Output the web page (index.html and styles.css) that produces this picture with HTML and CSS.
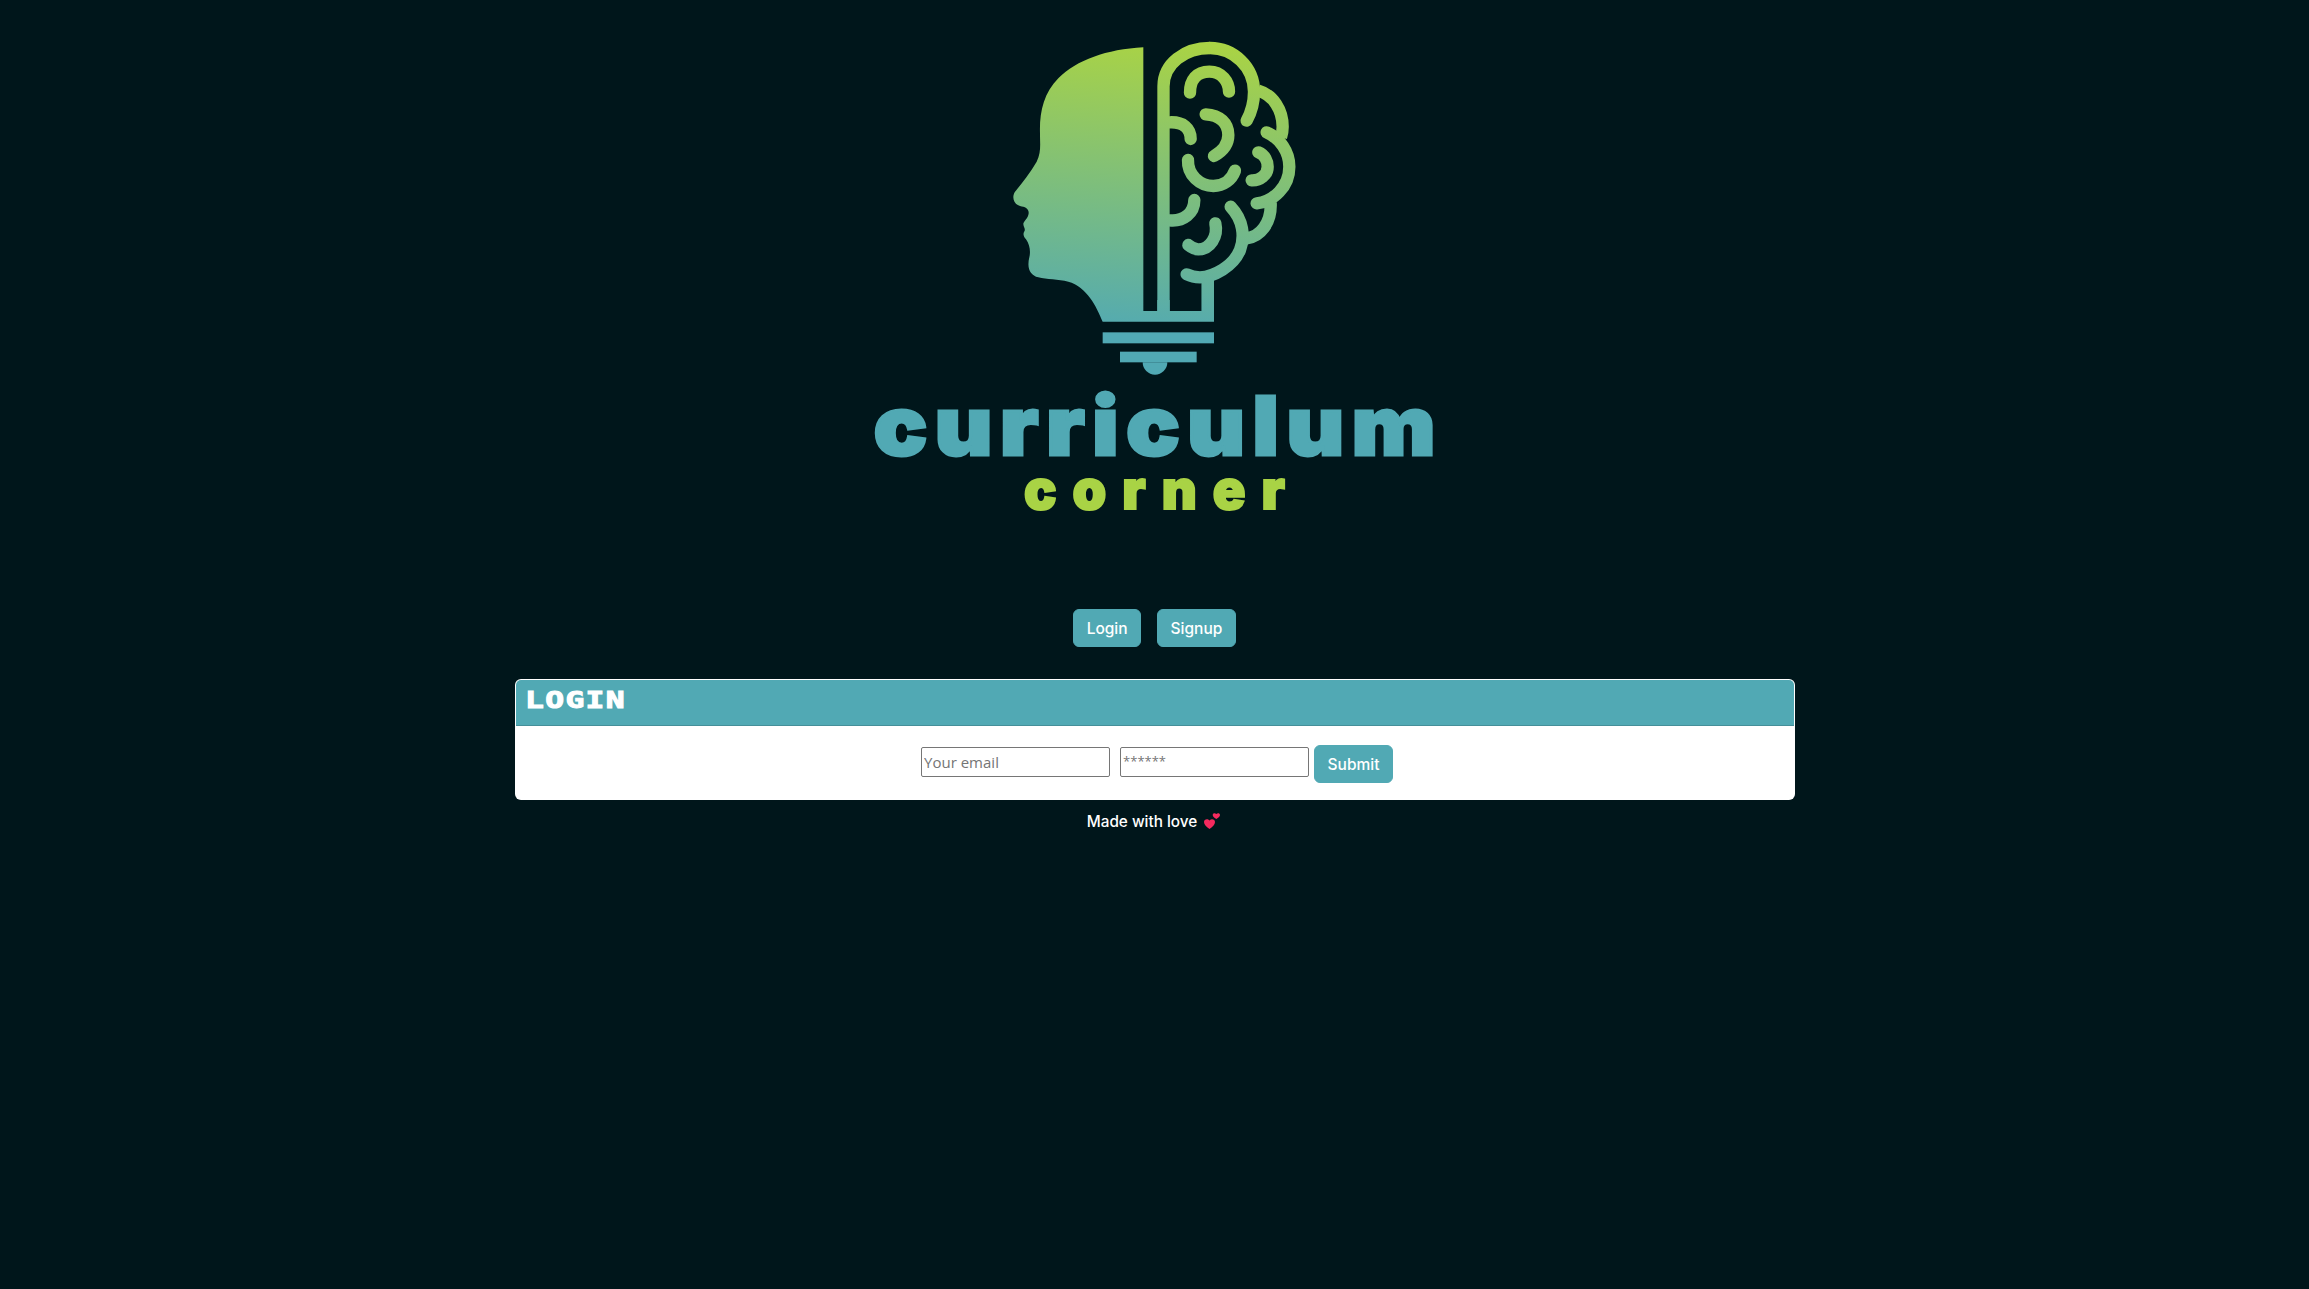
FILE: index.html
```html
<!DOCTYPE html>
<html lang="en">
<head>
<meta charset="utf-8">
<title>Curriculum Corner</title>
<link rel="stylesheet" href="styles.css">
</head>
<body>
<header class="brand">
  <svg class="logo-mark" viewBox="0 0 1050 1080" width="350" height="360" aria-hidden="true">
    <defs>
      <linearGradient id="g" gradientUnits="userSpaceOnUse" x1="570" y1="70" x2="500" y2="960">
        <stop offset="0" stop-color="#a9d345"/>
        <stop offset="1" stop-color="#51a9b4"/>
      </linearGradient>
    </defs>
    <path fill="url(#g)" d="M490 82C380 88 290 120 235 175C190 220 178 280 180 340C180 375 184 395 170 425C150 460 125 490 105 515C95 530 100 552 120 558C135 561 147 565 146 580C145 595 130 605 130 612C130 620 136 625 134 632C128 640 130 650 138 658C150 675 152 695 148 712C140 745 150 765 175 772C200 778 235 778 265 785C320 800 350 860 368 905H702V785H665V873H569V840H532V873H490Z"/>
    <g fill="none" stroke="url(#g)" stroke-width="37" stroke-linecap="round">
      <path stroke-linecap="butt" d="M550.500 880V200C550 130 615 84 690 84"/>
      <path d="M690 84C760 84 822 140 822 215C822 250 812 280 800 302"/>
      <path stroke-linecap="butt" d="M835 212C880 225 908 270 908 320C908 335 905 345 903 352"/>
      <path d="M860 337C900 355 928 395 928 440C928 500 880 545 830 550"/>
      <path stroke-linecap="butt" d="M872 548C875 610 840 650 800 655"/>
      <path d="M752 560C790 600 795 650 780 690C760 740 700 770 660 772C645 772 630 768 620 763"/>
      <path stroke-linecap="butt" d="M683.500 770V880"/>
      <path d="M630 218C630 180 650 155 688 155C725 155 747 185 747 215"/>
      <path d="M677 283C720 285 745 310 745 345C745 375 725 395 702 408"/>
      <path d="M569 307C610 305 632 325 632 357"/>
      <path d="M624 420C622 465 660 498 700 498C730 498 755 480 765 452"/>
      <path d="M835 397C855 405 863 425 863 440C863 465 840 482 815 481"/>
      <path d="M569 601C610 605 643 580 643 540"/>
      <path d="M706 610C715 650 690 688 655 688C645 688 635 683 625 675"/>
    </g>
    <g fill="#51a9b4">
      <rect x="368" y="937" width="334" height="33"/>
      <rect x="420" y="995" width="230" height="32"/>
      <path d="M488 1027H562A37 37 0 0 1 488 1027Z"/>
    </g>
  </svg>
  <div class="word-main">curriculum</div>
  <div class="word-sub">corner</div>
</header>

<nav class="nav">
  <button class="btn" type="button">Login</button>
  <button class="btn" type="button">Signup</button>
</nav>

<main class="card">
  <h2 class="card-head"><span class="card-title">LOGIN</span></h2>
  <form class="card-body">
    <input class="field" type="text" placeholder="Your email">
    <input class="field field-pass" type="password" placeholder="******">
    <button class="btn" type="button">Submit</button>
  </form>
</main>

<footer class="foot">
  <span class="foot-text">Made with love</span>
  <svg class="hearts" viewBox="0 0 16 16" width="16" height="16" aria-hidden="true">
    <path fill="#f52a5e" d="M5.500 16C2 13.500 0 11.500 0 9C0 6.300 3.500 5.200 5.500 7.500C7.500 5.200 11 6.300 11 9C11 11.500 9 13.500 5.500 16Z"/>
    <path fill="#f52a5e" d="M12.300 6C10 4.500 8.700 3.200 8.700 1.900C8.700 .2 11 -.3 12.300 1.100C13.600 -.3 16 .2 16 1.900C16 3.200 14.600 4.500 12.300 6Z"/>
  </svg>
</footer>
</body>
</html>
```

FILE: styles.css
```css
* { box-sizing: border-box; }
html, body { height: 100%; }
body {
  margin: 0;
  background: #00161b;
  color: #fff;
  font-family: "Inter", "Liberation Sans", sans-serif;
  display: flex;
  flex-direction: column;
  align-items: center;
}
.brand {
  display: flex;
  flex-direction: column;
  align-items: center;
  padding-top: 20px;
}
.logo-mark { display: block; }
.word-main {
  font-family: "Inter", "Liberation Sans", sans-serif;
  font-weight: 900;
  font-size: 81px;
  line-height: 76px;
  letter-spacing: 7px;
  padding-left: 7px;
  margin-top: 8px;
  color: #51a9b4;
  -webkit-text-stroke: 3px #51a9b4;
  transform: scaleX(1.095);
}
.word-sub {
  font-family: "Inter", "Liberation Sans", sans-serif;
  font-weight: 900;
  font-size: 54px;
  line-height: 44px;
  letter-spacing: 16px;
  padding-left: 16px;
  margin-top: 4px;
  color: #a9d345;
  -webkit-text-stroke: 2px #a9d345;
}
.nav {
  display: flex;
  gap: 16px;
  margin-top: 97px;
}
.btn {
  font-family: "Inter", "Liberation Sans", sans-serif;
  font-size: 15.500px;
  font-weight: 500;
  color: #fff;
  background: #51a9b4;
  border: 1px solid #51a9b4;
  border-radius: 6px;
  height: 38px;
  padding: 0 12.500px;
}
.card {
  width: 1280px;
  margin-top: 32px;
  background: #fff;
  border: 1px solid rgba(255, 255, 255, .75);
  border-radius: 6px;
  overflow: hidden;
}
.card-head {
  margin: 0;
  height: 46px;
  padding: 5px 9px 0;
  background: #51a9b4;
  border-bottom: 1px solid #458f99;
  line-height: 30px;
}
.card-title {
  display: inline-block;
  font-family: "DejaVu Sans Mono", monospace;
  font-weight: 700;
  font-size: 23px;
  letter-spacing: 1px;
  color: #fff;
  -webkit-text-stroke: 1px #fff;
  transform: scaleX(1.36);
  transform-origin: left center;
}
.card-body {
  height: 73px;
  padding: 19px 0 0 5px;
  display: flex;
  align-items: flex-start;
  justify-content: center;
  gap: 5px;
}
.field {
  width: 189px;
  height: 30px;
  margin: 2px 5px 0 0;
  padding: 1px 2px;
  font-family: "Open Sans", sans-serif;
  font-size: 15px;
  border: 1px solid #767676;
  border-radius: 2px;
  background: #fff;
}
.field::placeholder { color: #757575; }
.field-pass { margin-right: 0; font-size: 13px; padding-bottom: 4px; }
.foot {
  margin-top: 11px;
  display: flex;
  align-items: flex-start;
  gap: 7px;
  font-size: 15.300px;
  font-weight: 500;
  line-height: 20px;
  transform: translateX(-1px);
}
.foot-text { padding-top: 1px; }
.hearts { display: block; margin-top: 2px; }
```
